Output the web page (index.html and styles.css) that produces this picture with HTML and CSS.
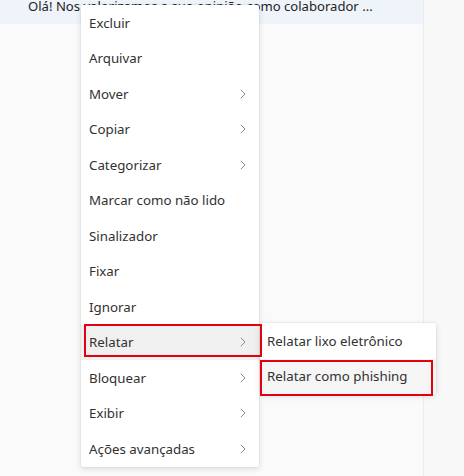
FILE: index.html
```html
<!DOCTYPE html>
<html lang="pt-BR">
<head>
<meta charset="utf-8">
<link rel="stylesheet" href="styles.css">
</head>
<body>
<div class="page">
  <div class="main">
    <div class="preview">Olá! Nos valorizamos a sua opinião como colaborador ...</div>
    <div class="list"></div>
  </div>
  <div class="side"></div>
</div>

<div class="menu">
  <div class="item">Excluir</div>
  <div class="item">Arquivar</div>
  <div class="item">Mover<svg class="chev" viewBox="0 0 6 10"><path d="M0.8 0.8 L5 5 L0.8 9.2"/></svg></div>
  <div class="item">Copiar<svg class="chev" viewBox="0 0 6 10"><path d="M0.8 0.8 L5 5 L0.8 9.2"/></svg></div>
  <div class="item">Categorizar<svg class="chev" viewBox="0 0 6 10"><path d="M0.8 0.8 L5 5 L0.8 9.2"/></svg></div>
  <div class="item">Marcar como não lido</div>
  <div class="item">Sinalizador</div>
  <div class="item">Fixar</div>
  <div class="item">Ignorar</div>
  <div class="item active">Relatar<svg class="chev" viewBox="0 0 6 10"><path d="M0.8 0.8 L5 5 L0.8 9.2"/></svg></div>
  <div class="item">Bloquear<svg class="chev" viewBox="0 0 6 10"><path d="M0.8 0.8 L5 5 L0.8 9.2"/></svg></div>
  <div class="item">Exibir<svg class="chev" viewBox="0 0 6 10"><path d="M0.8 0.8 L5 5 L0.8 9.2"/></svg></div>
  <div class="item">Ações avançadas<svg class="chev" viewBox="0 0 6 10"><path d="M0.8 0.8 L5 5 L0.8 9.2"/></svg></div>
</div>

<div class="submenu">
  <div class="item">Relatar lixo eletrônico</div>
  <div class="item hover">Relatar como phishing</div>
</div>

<div class="mark mark-relatar"></div>
<div class="mark mark-phishing"></div>
</body>
</html>
```

FILE: styles.css
```css
html, body {
  margin: 0;
  padding: 0;
}
body {
  width: 464px;
  height: 476px;
  overflow: hidden;
  font-family: "Noto Sans", "Open Sans", sans-serif;
  color: #323130;
  position: relative;
}
.page {
  display: flex;
  height: 476px;
}
.main {
  width: 423px;
  display: flex;
  flex-direction: column;
  border-right: 1px solid #ececec;
}
.preview {
  height: 24px;
  background: #eff4fa;
  font-size: 13.1px;
  line-height: 13px;
  padding-left: 28px;
  color: #242424;
  white-space: nowrap;
  box-sizing: border-box;
}
.list {
  flex: 1;
  background: #fafafa;
}
.side {
  flex: 1;
  background: #f8f8f8;
}
.menu {
  position: absolute;
  left: 81px;
  top: 5px;
  width: 178px;
  background: #fff;
  box-shadow: 0 0 2px rgba(0,0,0,0.12), 0 2px 6px rgba(0,0,0,0.12);
  border-radius: 2px;
}
.item {
  height: 35.5px;
  display: flex;
  align-items: center;
  justify-content: space-between;
  padding: 0 13px 0 8px;
  font-size: 13.3px;
  color: #323130;
  white-space: nowrap;
}
.item.active {
  background: #f0f0f0;
}
.chev {
  width: 6px;
  height: 10px;
  fill: none;
  stroke: #8a8a8a;
  stroke-width: 1;
}
.submenu {
  position: absolute;
  left: 260px;
  top: 323px;
  width: 176px;
  background: #fff;
  box-shadow: 0 0 2px rgba(0,0,0,0.12), 0 2px 6px rgba(0,0,0,0.12);
  border-radius: 2px;
}
.submenu .item {
  padding-left: 7px;
}
.submenu .item.hover {
  background: #f5f5f5;
}
.mark {
  position: absolute;
  border: 2px solid #e3000f;
  box-sizing: border-box;
}
.mark-relatar {
  left: 84px;
  top: 324px;
  width: 178px;
  height: 33px;
}
.mark-phishing {
  left: 260px;
  top: 360px;
  width: 173px;
  height: 36px;
}
```
